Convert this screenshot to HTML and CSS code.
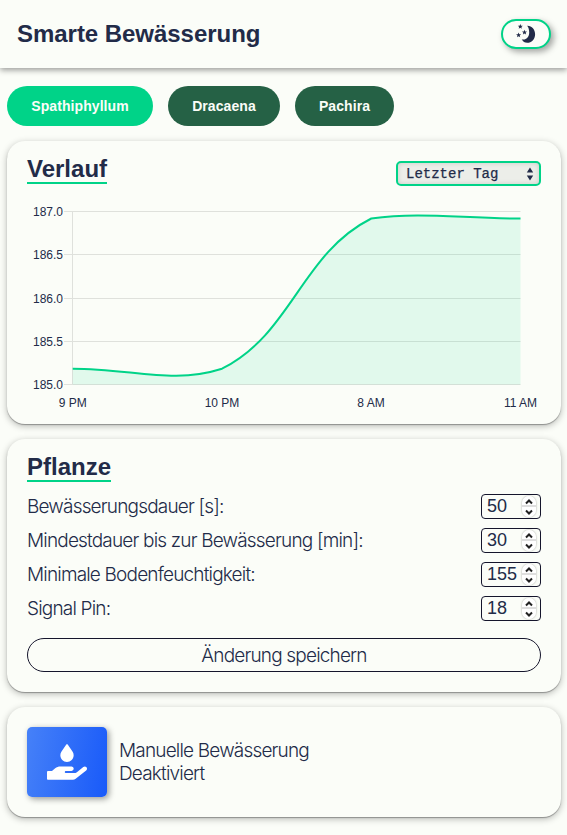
FILE: index.html
```html
<!DOCTYPE html>
<html lang="de">
<head>
<meta charset="utf-8">
<title>Smarte Bewässerung</title>
<link rel="stylesheet" href="styles.css">
</head>
<body>
<header class="header">
  <h1>Smarte Bewässerung</h1>
  <button class="theme" aria-label="Theme">
    <svg width="20" height="20" viewBox="0 0 20 20">
      <path d="M11.100 1.700C15.800 1.500 19.100 5.500 19.100 10.200C19.100 15.200 15.500 18.800 11.200 18.800C8.800 18.800 6.900 17.500 5.700 15.200C6.600 15.600 7.500 15.600 8.600 15.400C11.500 14.800 13.200 12 13.200 8.600C13.200 5.800 12.600 3.300 11.100 1.700Z"/>
      <path id="star" d="M4.300 0L5 1.700L6.800 1.800L5.400 3L5.900 4.700L4.300 3.800L2.700 4.700L3.200 3L1.800 1.800L3.600 1.700Z"/>
      <use href="#star" x="4.200" y="5.800"/>
      <use href="#star" x="-1.700" y="8.500"/>
    </svg>
  </button>
</header>
<nav class="tabs">
  <button class="tab active">Spathiphyllum</button>
  <button class="tab">Dracaena</button>
  <button class="tab">Pachira</button>
</nav>
<main>
  <section class="card history">
    <div class="card-head">
      <h2>Verlauf</h2>
      <div class="select"><span>Letzter Tag</span>
        <svg width="8" height="14" viewBox="0 0 8 14"><path d="M4 .5L7.200 5.500H.8ZM4 13.500L.8 8.500H7.200Z"/></svg>
      </div>
    </div>
    <svg class="chart" width="534" height="212" viewBox="17 202 534 212">
      <path class="grid" d="M64 211.500H520.500M64 254.500H520.500M64 298.500H520.500M64 341.500H520.500M64 384.500H520.500M72.500 211V385"/>
      <path class="area" d="M72.700 368.700C132.400 368.700 172.700 384.500 222 368.700C292.100 333.500 301.200 253.700 371.300 218.500C420.600 211.500 460.800 218.500 520.500 218.500V384.500H72.700Z"/>
      <path class="line" d="M72.700 368.700C132.400 368.700 172.700 384.500 222 368.700C292.100 333.500 301.200 253.700 371.300 218.500C420.600 211.500 460.800 218.500 520.500 218.500"/>
      <g text-anchor="end">
        <text x="63" y="216">187.0</text><text x="63" y="259">186.5</text><text x="63" y="303">186.0</text><text x="63" y="346">185.5</text><text x="63" y="389">185.0</text>
      </g>
      <g text-anchor="middle">
        <text x="72.700" y="407">9 PM</text><text x="222" y="407">10 PM</text><text x="371" y="407">8 AM</text><text x="520.500" y="407">11 AM</text>
      </g>
    </svg>
  </section>
  <section class="card plant">
    <h2>Pflanze</h2>
    <div class="row"><span>Bewässerungsdauer [s]:</span><div class="num">50<i class="spin"><svg viewBox="0 0 14 21"><path d="M4 7.500L7 4.500L10 7.500M4 14.500L7 17.500L10 14.500"/></svg></i></div></div>
    <div class="row"><span>Mindestdauer bis zur Bewässerung [min]:</span><div class="num">30<i class="spin"><svg viewBox="0 0 14 21"><path d="M4 7.500L7 4.500L10 7.500M4 14.500L7 17.500L10 14.500"/></svg></i></div></div>
    <div class="row"><span>Minimale Bodenfeuchtigkeit:</span><div class="num">155<i class="spin"><svg viewBox="0 0 14 21"><path d="M4 7.500L7 4.500L10 7.500M4 14.500L7 17.500L10 14.500"/></svg></i></div></div>
    <div class="row"><span>Signal Pin:</span><div class="num">18<i class="spin"><svg viewBox="0 0 14 21"><path d="M4 7.500L7 4.500L10 7.500M4 14.500L7 17.500L10 14.500"/></svg></i></div></div>
    <button class="save">Änderung speichern</button>
  </section>
  <section class="card manual">
    <button class="water" aria-label="Manuelle Bewässerung">
      <svg width="40" height="36" viewBox="0 0 576 512"><path d="M275.500 6.600C278.300 2.500 283 0 288 0s9.700 2.500 12.500 6.600L366.800 103C378 119.300 384 138.600 384 158.300V160c0 53-43 96-96 96s-96-43-96-96v-1.700c0-19.800 6-39 17.200-55.300zM565.300 328.100c-11.800-10.700-30.200-10-42.600 0L430.300 402c-11.300 9.100-25.400 14-40 14H272c-8.800 0-16-7.200-16-16s7.200-16 16-16h78.300c16 0 30.800-11 33.400-26.700 3.300-20-12.100-37.300-31.600-37.300H192c-27 0-53.100 9.300-74.100 26.300L71.400 384H16c-8.800 0-16 7.200-16 16v96c0 8.800 7.200 16 16 16h356.800c14.500 0 28.600-4.900 40-14L564 377c15.200-12.100 16.400-35.300 1.300-48.900z"/></svg>
    </button>
    <div>Manuelle Bewässerung<br>Deaktiviert</div>
  </section>
</main>
</body>
</html>
```
FILE: styles.css
```css
* { box-sizing: border-box; }
body { margin: 0; min-height: 100vh; background: #fbfdf8; color: #222b48; font: 300 19px/23px Inter, "Liberation Sans", sans-serif; letter-spacing: -0.82px; }
h1, h2, button { margin: 0; font-family: "Liberation Sans", sans-serif; }
h1, h2 { font-size: 24px; font-weight: 700; line-height: 28px; letter-spacing: 0; }
h1 { letter-spacing: -0.04px; }
svg { display: block; }
.header { height: 68px; padding: 0 16px 0 17px; display: flex; align-items: center; justify-content: space-between; box-shadow: 0 2px 6px rgba(0,0,0,.4); }
.theme { width: 50px; height: 30px; padding: 0; display: flex; align-items: center; justify-content: center; border: 2px solid #00d388; border-radius: 15px; background: #fbfdf8; box-shadow: 3px 3px 6px rgba(0,0,0,.35); fill: #222b48; }
.tabs { display: flex; gap: 15px; padding: 18px 7px 15px; }
.tab { width: 112px; height: 40px; padding: 0; border: 0; border-radius: 20px; background: #256145; color: #fbfdf8; font-size: 14px; font-weight: 700; letter-spacing: .08px; }
.tab.active { width: 146px; background: #00d388; }
.tab:last-child { width: 99px; }
main { display: flex; flex-direction: column; gap: 15px; padding: 0 6px 18px 7px; }
.card { border-radius: 18px; padding: 14px 20px 20px; background: #fbfdf8; box-shadow: 0 1px 1px rgba(0,0,0,.3), 0 2px 7px rgba(0,0,0,.28); }
h2 { width: max-content; height: 29px; border-bottom: 2px solid #00d388; }
.history { height: 283px; }
.card-head { display: flex; justify-content: space-between; }
.select { width: 145px; height: 25px; margin-top: 6px; padding: 0 5px 0 8px; display: flex; align-items: center; justify-content: space-between; border: 2px solid #00d388; border-radius: 5px; background: #eceee9; box-shadow: inset 0 0 5px rgba(0,0,0,.15); font: 400 14px "Liberation Mono", monospace; letter-spacing: 0; fill: #222b48; -webkit-text-stroke: .25px #222b48; }
.chart { margin: 16px 0 0 -10px; font: 400 12px "Liberation Sans", sans-serif; letter-spacing: 0; fill: #222b48; }
.grid { stroke: #dfe1dc; fill: none; }
.area { fill: #00d388; fill-opacity: .1; }
.line { fill: none; stroke: #00d388; stroke-width: 2; }
.plant { height: 253px; }
.plant h2 { margin-bottom: 12px; }
.row { height: 25px; margin-bottom: 9px; display: flex; align-items: center; justify-content: space-between; }
.num { width: 60px; height: 25px; padding: 0 4px 0 5px; display: flex; align-items: center; justify-content: space-between; border: 1px solid #15152c; border-radius: 4px; font: 400 18px "Liberation Sans", sans-serif; letter-spacing: 0; }
.spin { width: 14px; height: 21px; margin-bottom: 1px; border-radius: 7px; background: linear-gradient(#fff 9px, #dedede 9px, #dedede 11px, #fff 11px); box-shadow: 0 0 2px rgba(0,0,0,.4); }
.spin svg { fill: none; stroke: #222; stroke-width: 2; }
.save { width: 514px; height: 34px; margin-top: 10px; padding: 0; border: 1px solid #15152c; border-radius: 17px; background: none; color: inherit; font: inherit; letter-spacing: inherit; }
.row:nth-last-child(2) { margin-bottom: 7px; }
.manual { height: 110px; padding: 20px; display: flex; gap: 12px; }
.manual > div { padding-top: 12px; }
.water { width: 80px; height: 70px; padding: 0; display: flex; align-items: center; justify-content: center; border: 0; border-radius: 5px; background: linear-gradient(100deg, #4681f8, #195af9); box-shadow: 2px 2px 6px rgba(0,0,0,.4); fill: #fff; }
```
